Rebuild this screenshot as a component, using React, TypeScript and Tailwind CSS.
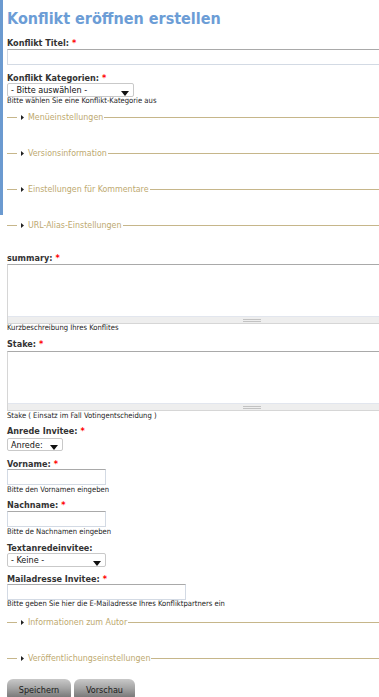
import React from "react";

const F = { fontFamily: '"DejaVu Sans Condensed", "Liberation Sans", sans-serif' };

function Req() {
  return <span className="text-[#ff0000] ml-[3px]">*</span>;
}

function Label({ children, className = "", req = true }: { children: React.ReactNode; className?: string; req?: boolean }) {
  return (
    <div className={`h-[10px] text-[9px] leading-[10px] font-bold text-[#333] whitespace-nowrap ${className}`}>
      {children}
      {req && <Req />}
    </div>
  );
}

function Help({ children, className = "" }: { children: React.ReactNode; className?: string }) {
  return <div className={`h-[8px] text-[7.6px] leading-[8px] text-[#222] whitespace-nowrap ${className}`}>{children}</div>;
}

function Input({ w, className = "" }: { w: string; className?: string }) {
  return <div className={`${w} h-[16px] border border-[#d3dae4] border-t-[#a9a9a9] bg-white ${className}`} />;
}

function Arrow() {
  return (
    <svg width="8" height="5" viewBox="0 0 8 5" className="block">
      <path d="M0 0 H8 L4 5 Z" fill="#111" />
    </svg>
  );
}

function Select({ w, h, text, className = "" }: { w: string; h: string; text: string; className?: string }) {
  return (
    <div className={`${w} ${h} border border-[#c9c9c9] rounded-[2px] bg-white flex items-center justify-between pl-[3px] pr-[4px] ${className}`}>
      <span className="text-[9px] leading-[10px] text-[#111] whitespace-nowrap">{text}</span>
      <div className="mt-[6px]">
        <Arrow />
      </div>
    </div>
  );
}

function Fieldset({ title, className = "" }: { title: string; className?: string }) {
  return (
    <div className={`h-[12px] flex items-center ${className}`}>
      <div className="w-[10px] h-px bg-[#c6b68a]" />
      <div className="ml-[4px] w-[3px] flex items-center">
        <svg width="3" height="5" viewBox="0 0 3 5" className="block">
          <path d="M0 0 L3 2.5 L0 5 Z" fill="#222" />
        </svg>
      </div>
      <span className="ml-[4px] text-[8.8px] leading-[12px] text-[#bda96f] whitespace-nowrap">{title}</span>
      <div className="flex-1 h-px bg-[#c6b68a] ml-px" />
    </div>
  );
}

function TextArea({ className = "" }: { className?: string }) {
  return (
    <div className={`w-[490px] h-[60px] flex flex-col border border-[#d6d6d6] border-t-[#a9a9a9] ${className}`}>
      <div className="flex-1 bg-white" />
      <div className="h-[7px] bg-[#eeeeee] border-t border-[#e2e6ee] flex flex-col items-center justify-center gap-px">
        <div className="w-[18px] h-px bg-[#c2c2c2]" />
        <div className="w-[18px] h-px bg-[#c2c2c2]" />
      </div>
    </div>
  );
}

function Button({ children, w }: { children: React.ReactNode; w: string }) {
  return (
    <div
      className={`${w} h-[19px] rounded-t-[6px] rounded-b-[2px] bg-gradient-to-b from-[#c9c9c9] via-[#a3a3a3] to-[#757575] flex items-center justify-center text-[9px] leading-[10px] text-[#1b1b1b] pt-[2px]`}
    >
      {children}
    </div>
  );
}

export default function App() {
  return (
    <div className="w-[379px] h-[697px] overflow-hidden bg-white" style={F}>
      <div className="border-l-[3px] border-[#6b9ad0] pl-[4px] h-[215px]">
        <div className="h-[38px] pt-[9px]">
          <h1 className="text-[16px] leading-[20px] font-bold text-[#6c9dd6] whitespace-nowrap">Konflikt eröffnen erstellen</h1>
        </div>
        <Label>Konflikt Titel:</Label>
        <Input w="w-[440px]" className="mt-px" />
        <Label className="mt-[8px]">Konflikt Kategorien:</Label>
        <Select w="w-[127px]" h="h-[14px]" text="- Bitte auswählen -" />
        <Help>Bitte wählen Sie eine Konflikt-Kategorie aus</Help>
        <div className="w-[440px] -ml-[7px] pl-[7px]">
          <Fieldset title="Menüeinstellungen" className="mt-[6px]" />
          <Fieldset title="Versionsinformation" className="mt-[24px]" />
          <Fieldset title="Einstellungen für Kommentare" className="mt-[24px]" />
        </div>
      </div>
      <div className="pl-[7px] w-[500px]">
        <div className="w-[440px] -ml-[7px] pl-[7px]">
          <Fieldset title="URL-Alias-Einstellungen" className="mt-[4px]" />
        </div>
        <Label className="mt-[22px]">summary:</Label>
        <TextArea className="mt-px" />
        <Help>Kurzbeschreibung Ihres Konflites</Help>
        <Label className="mt-[7px]">Stake:</Label>
        <TextArea className="mt-[2px]" />
        <Help className="mt-px">Stake ( Einsatz im Fall Votingentscheidung )</Help>
        <Label className="mt-[6px]">Anrede Invitee:</Label>
        <Select w="w-[56px]" h="h-[13px]" text="Anrede:" className="mt-[2px]" />
        <Label className="mt-[8px]">Vorname:</Label>
        <Input w="w-[99px]" />
        <Help className="mt-px">Bitte den Vornamen eingeben</Help>
        <Label className="mt-[6px]">Nachname:</Label>
        <Input w="w-[99px]" className="mt-px" />
        <Help className="mt-px">Bitte de Nachnamen eingeben</Help>
        <Label className="mt-[7px]" req={false}>Textanredeinvitee:</Label>
        <Select w="w-[99px]" h="h-[14px]" text="- Keine -" />
        <Label className="mt-[7px]">Mailadresse Invitee:</Label>
        <Input w="w-[179px]" />
        <Help>Bitte geben Sie hier die E-Mailadresse Ihres Konfliktpartners ein</Help>
        <div className="w-[440px] -ml-[7px] pl-[7px]">
          <Fieldset title="Informationen zum Autor" className="mt-[8px]" />
          <Fieldset title="Veröffentlichungseinstellungen" className="mt-[24px]" />
        </div>
        <div className="mt-[15px] flex gap-[3px]">
          <Button w="w-[64px]">Speichern</Button>
          <Button w="w-[61px]">Vorschau</Button>
        </div>
      </div>
    </div>
  );
}
